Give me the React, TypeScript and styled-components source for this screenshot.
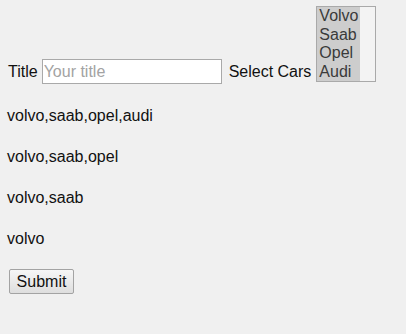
import styled, { createGlobalStyle } from "styled-components";

const GlobalStyle = createGlobalStyle`
  html, body {
    margin: 0;
    padding: 0;
    background: #f0f0f0;
  }
  body {
    font-family: "Liberation Sans", Arial, sans-serif;
    font-size: 16px;
    color: #111;
  }
`;

const Page = styled.form`
  padding: 6px 0 0 8px;
  width: 406px;
  height: 334px;
  box-sizing: border-box;
`;

const FieldRow = styled.div`
  display: flex;
  align-items: flex-end;
  height: 78px;
`;

const Label = styled.span<{ $gap?: number }>`
  line-height: 18px;
  margin: 0 0 3px ${(p) => p.$gap ?? 0}px;
`;

const TitleInput = styled.input`
  box-sizing: border-box;
  width: 180px;
  height: 25px;
  margin-left: 4px;
  padding: 2px 1px;
  border: 1px solid #a9a9a9;
  background: #fff;
  font-family: "Liberation Sans", Arial, sans-serif;
  font-size: 16px;
  outline: none;
  &::placeholder {
    color: #a3a3a3;
  }
`;

const ListBox = styled.div`
  box-sizing: border-box;
  display: flex;
  width: 60px;
  height: 76px;
  margin: 0 0 2px 5px;
  border: 1px solid #a9a9a9;
  background: #f0f0f0;
`;

const Options = styled.div`
  width: 43px;
  background: #cdcdcd;
`;

const Option = styled.div`
  height: 18.5px;
  line-height: 18.5px;
  padding-left: 2px;
  color: #3a3a3a;
`;

const Track = styled.div`
  flex: 1;
  background: #f3f3f3;
`;

const Output = styled.div`
  line-height: 41px;
  height: 41px;
  margin-left: -1px;
`;

const Results = styled.div`
  margin-top: 11px;
`;

const SubmitButton = styled.button`
  box-sizing: border-box;
  margin: 10px 0 0 1px;
  width: 65px;
  height: 25px;
  padding: 0;
  border: 1px solid #a3a3a3;
  border-radius: 2px;
  background: linear-gradient(#f6f6f6, #dedede);
  font-family: "Liberation Sans", Arial, sans-serif;
  font-size: 16px;
  color: #111;
`;

const cars = ["Volvo", "Saab", "Opel", "Audi"];
const results = [
  "volvo,saab,opel,audi",
  "volvo,saab,opel",
  "volvo,saab",
  "volvo",
];

const App = () => {
  return (
    <>
      <GlobalStyle />
      <Page onSubmit={(e) => e.preventDefault()}>
        <FieldRow>
          <Label>Title</Label>
          <TitleInput placeholder="Your title" />
          <Label $gap={7}>Select Cars</Label>
          <ListBox>
            <Options>
              {cars.map((c) => (
                <Option key={c}>{c}</Option>
              ))}
            </Options>
            <Track />
          </ListBox>
        </FieldRow>
        <Results>
          {results.map((r) => (
            <Output key={r}>{r}</Output>
          ))}
        </Results>
        <SubmitButton type="submit">Submit</SubmitButton>
      </Page>
    </>
  );
};

export default App;
